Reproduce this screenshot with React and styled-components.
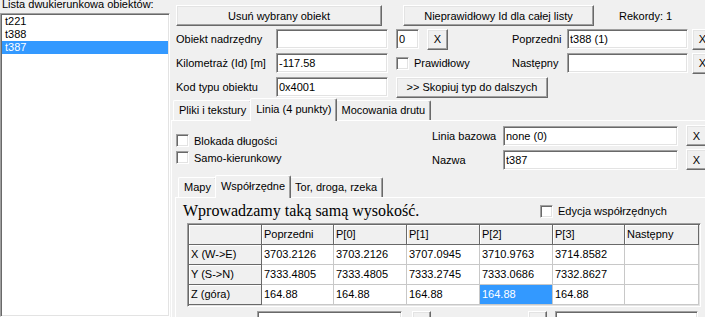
import styled, { createGlobalStyle, css } from "styled-components";

const GlobalStyle = createGlobalStyle`
  html, body {
    margin: 0;
    padding: 0;
    background: #f0f0f0;
    overflow: hidden;
  }
  body {
    font-family: "Liberation Sans", Arial, sans-serif;
    font-size: 11px;
    color: #000;
  }
  * {
    box-sizing: border-box;
  }
`;

const sunken = css`
  border-style: solid;
  border-width: 1px;
  border-color: #a0a0a0 #ffffff #ffffff #a0a0a0;
  box-shadow: inset 1px 1px 0 #696969, inset -1px -1px 0 #e3e3e3;
`;

const raised = css`
  border-style: solid;
  border-width: 1px;
  border-color: #ffffff #696969 #696969 #ffffff;
  box-shadow: inset -1px -1px 0 #a0a0a0, inset 1px 1px 0 #e3e3e3;
`;

const Window = styled.div`
  display: flex;
  width: 705px;
  height: 317px;
  overflow: hidden;
`;

const ListPane = styled.div`
  width: 170px;
  flex-shrink: 0;
  display: flex;
  flex-direction: column;
`;

const ListCaption = styled.div`
  height: 13px;
  line-height: 9px;
  padding-left: 2px;
  white-space: nowrap;
  overflow: hidden;
`;

const ListBox = styled.div`
  ${sunken};
  flex: 1;
  background: #fff;
  border-width: 1px;
  padding: 1px;
`;

const ListItem = styled.div`
  height: 13px;
  line-height: 13px;
  padding-left: 3px;
  background: ${(p) => (p.$selected ? "#3399ff" : "transparent")};
  color: ${(p) => (p.$selected ? "#fff" : "#000")};
`;

const Main = styled.div`
  flex: 1;
  min-width: 0;
  display: flex;
  flex-direction: column;
  padding-left: 1px;
`;

const Header = styled.div`
  padding: 5px 0 0 5px;
`;

const TopBar = styled.div`
  display: flex;
  align-items: center;
  height: 21px;
`;

const PushButton = styled.button`
  ${raised};
  flex-shrink: 0;
  background: #f0f0f0;
  font: inherit;
  color: #000;
  width: ${(p) => p.$w}px;
  height: ${(p) => p.$h || 21}px;
  margin-left: ${(p) => p.$ml || 0}px;
  padding: 0;
  white-space: nowrap;
`;

const Records = styled.span`
  margin-left: 25px;
  white-space: nowrap;
`;

const FormRow = styled.div`
  display: flex;
  align-items: center;
  height: 20px;
  margin-top: ${(p) => p.$mt || 4}px;
`;

const FieldLabel = styled.span`
  width: ${(p) => p.$w}px;
  flex-shrink: 0;
  white-space: nowrap;
`;

const TextBox = styled.input`
  ${sunken};
  flex-shrink: 0;
  background: #fff;
  width: ${(p) => p.$w}px;
  height: ${(p) => p.$h || 20}px;
  margin-left: ${(p) => p.$ml || 0}px;
  padding: 0 2px;
  font: inherit;
  color: #000;
  outline: none;
`;

const Mid = styled.div`
  display: flex;
  align-items: center;
  gap: 8px;
  width: 124px;
  flex-shrink: 0;
  padding-left: 8px;
`;

const CheckLine = styled.label`
  display: flex;
  align-items: center;
  gap: 5px;
  height: ${(p) => p.$h || 17}px;
  white-space: nowrap;
`;

const CheckBox = styled.span`
  ${sunken};
  width: 13px;
  height: 13px;
  flex-shrink: 0;
  background: #fff;
`;

const TabStrip = styled.div`
  display: flex;
  align-items: flex-end;
  height: 22px;
  padding-left: ${(p) => p.$pl || 2}px;
`;

const Tab = styled.div`
  position: relative;
  z-index: ${(p) => (p.$active ? 1 : 0)};
  height: ${(p) => (p.$active ? 23 : 20)}px;
  margin: 0 ${(p) => (p.$active ? -2 : 0)}px ${(p) => (p.$active ? -1 : 0)}px;
  padding: ${(p) => (p.$active ? "3px" : "2px")} 5px 0;
  background: #f0f0f0;
  border-style: solid;
  border-width: 1px 1px 0 1px;
  border-color: #fff #696969 #696969 #fff;
  border-radius: 2px 2px 0 0;
  box-shadow: inset -1px 0 0 #a0a0a0;
  white-space: nowrap;
  line-height: 14px;
`;

const Page = styled.div`
  flex: 1;
  border-top: 1px solid #fff;
  border-left: 1px solid #fff;
  display: flex;
  flex-direction: column;
  padding: ${(p) => p.$pad || 0};
`;

const TabControl = styled.div`
  display: flex;
  flex-direction: column;
  flex: 1;
  margin-top: ${(p) => p.$mt || 0}px;
  margin-left: ${(p) => p.$ml || 0}px;
`;

const PageTop = styled.div`
  display: flex;
  height: 54px;
`;

const OptionsCol = styled.div`
  width: 260px;
  flex-shrink: 0;
  padding: 11px 0 0 4px;
`;

const LineCol = styled.div`
  display: flex;
  flex-direction: column;
  gap: 3px;
  padding-top: 4px;
`;

const LineRow = styled.div`
  display: flex;
  align-items: center;
  height: 21px;
`;

const HeadingRow = styled.div`
  display: flex;
  align-items: center;
  height: 22px;
  margin-top: 2px;
`;

const Heading = styled.div`
  width: 357px;
  flex-shrink: 0;
  font-family: "Liberation Serif", "Times New Roman", serif;
  font-size: 16px;
  line-height: 22px;
  white-space: nowrap;
`;

const Grid = styled.div`
  ${sunken};
  border-width: 1px;
  padding: 1px;
  margin: 1px 0 0 4px;
  width: 514px;
  display: grid;
  grid-template-columns: 73px 72px 73px 73px 73px 72px 74px;
  grid-auto-rows: 20px;
  background: #fff;
`;

const Cell = styled.div`
  padding-left: 2px;
  line-height: 19px;
  white-space: nowrap;
  overflow: hidden;
  border-right: 1px solid ${(p) => (p.$fixed ? "#696969" : "#c8c8c8")};
  border-bottom: 1px solid ${(p) => (p.$fixed ? "#696969" : "#c8c8c8")};
  background: ${(p) => (p.$fixed ? "#f0f0f0" : p.$selected ? "#3399ff" : "#fff")};
  color: ${(p) => (p.$selected ? "#fff" : "#000")};
  box-shadow: ${(p) => (p.$fixed ? "inset 1px 1px 0 #fff" : "none")};
`;

const BottomRow = styled.div`
  display: flex;
  align-items: flex-start;
  margin-top: 4px;
`;

const items = ["t221", "t388", "t387"];

const columns = ["Poprzedni", "P[0]", "P[1]", "P[2]", "P[3]", "Następny"];

const rows = [
  ["X (W->E)", ["3703.2126", "3703.2126", "3707.0945", "3710.9763", "3714.8582", ""]],
  ["Y (S->N)", ["7333.4805", "7333.4805", "7333.2745", "7333.0686", "7332.8627", ""]],
  ["Z (góra)", ["164.88", "164.88", "164.88", "164.88", "164.88", ""]],
];

function Check({ children, h }) {
  return (
    <CheckLine $h={h}>
      <CheckBox />
      {children}
    </CheckLine>
  );
}

export default function App() {
  return (
    <>
      <GlobalStyle />
      <Window>
        <ListPane>
          <ListCaption>Lista dwukierunkowa obiektów:</ListCaption>
          <ListBox>
            {items.map((it) => (
              <ListItem key={it} $selected={it === "t387"}>
                {it}
              </ListItem>
            ))}
          </ListBox>
        </ListPane>

        <Main>
          <Header>
            <TopBar>
              <PushButton $w={206}>Usuń wybrany obiekt</PushButton>
              <PushButton $w={191} $ml={21}>
                Nieprawidłowy Id dla całej listy
              </PushButton>
              <Records>Rekordy: 1</Records>
            </TopBar>

            <FormRow $mt={3}>
              <FieldLabel $w={100}>Obiekt nadrzędny</FieldLabel>
              <TextBox $w={112} readOnly defaultValue="" />
              <Mid>
                <TextBox $w={23} readOnly defaultValue="0" />
                <PushButton $w={21}>X</PushButton>
              </Mid>
              <FieldLabel $w={55}>Poprzedni</FieldLabel>
              <TextBox $w={121} readOnly defaultValue="t388 (1)" />
              <PushButton $w={21} $ml={4}>X</PushButton>
            </FormRow>

            <FormRow>
              <FieldLabel $w={100}>Kilometraż (Id) [m]</FieldLabel>
              <TextBox $w={112} readOnly defaultValue="-117.58" />
              <Mid>
                <Check>Prawidłowy</Check>
              </Mid>
              <FieldLabel $w={55}>Następny</FieldLabel>
              <TextBox $w={121} readOnly defaultValue="" />
              <PushButton $w={21} $ml={4}>X</PushButton>
            </FormRow>

            <FormRow>
              <FieldLabel $w={100}>Kod typu obiektu</FieldLabel>
              <TextBox $w={112} readOnly defaultValue="0x4001" />
              <Mid>
                <PushButton $w={152}>&gt;&gt; Skopiuj typ do dalszych</PushButton>
              </Mid>
            </FormRow>
          </Header>

          <TabControl $mt={1}>
            <TabStrip>
              <Tab>Pliki i tekstury</Tab>
              <Tab $active>Linia (4 punkty)</Tab>
              <Tab>Mocowania drutu</Tab>
            </TabStrip>
            <Page>
              <PageTop>
                <OptionsCol>
                  <Check>Blokada długości</Check>
                  <Check>Samo-kierunkowy</Check>
                </OptionsCol>
                <LineCol>
                  <LineRow>
                    <FieldLabel $w={71}>Linia bazowa</FieldLabel>
                    <TextBox $w={175} readOnly defaultValue="none (0)" />
                    <PushButton $w={21} $ml={8}>X</PushButton>
                  </LineRow>
                  <LineRow>
                    <FieldLabel $w={71}>Nazwa</FieldLabel>
                    <TextBox $w={175} readOnly defaultValue="t387" />
                    <PushButton $w={21} $ml={8}>X</PushButton>
                  </LineRow>
                </LineCol>
              </PageTop>

              <TabControl $ml={3}>
                <TabStrip $pl={3}>
                  <Tab>Mapy</Tab>
                  <Tab $active>Współrzędne</Tab>
                  <Tab>Tor, droga, rzeka</Tab>
                </TabStrip>
                <Page $pad="0 0 0 7px">
                  <HeadingRow>
                    <Heading>Wprowadzamy taką samą wysokość.</Heading>
                    <Check>Edycja współrzędnych</Check>
                  </HeadingRow>

                  <Grid>
                    <Cell $fixed />
                    {columns.map((c) => (
                      <Cell key={c} $fixed>
                        {c}
                      </Cell>
                    ))}
                    {rows.map(([name, values], r) => [
                      <Cell key={name} $fixed>
                        {name}
                      </Cell>,
                      ...values.map((v, i) => (
                        <Cell key={name + i} $selected={r === 2 && i === 3}>
                          {v}
                        </Cell>
                      )),
                    ])}
                  </Grid>

                  <BottomRow>
                    <TextBox $w={145} $ml={74} readOnly defaultValue="800 W" />
                    <PushButton $w={19} $ml={10} />
                    <PushButton $w={19} $ml={97} />
                    <TextBox $w={143} $ml={8} readOnly defaultValue="" />
                  </BottomRow>
                </Page>
              </TabControl>
            </Page>
          </TabControl>
        </Main>
      </Window>
    </>
  );
}
